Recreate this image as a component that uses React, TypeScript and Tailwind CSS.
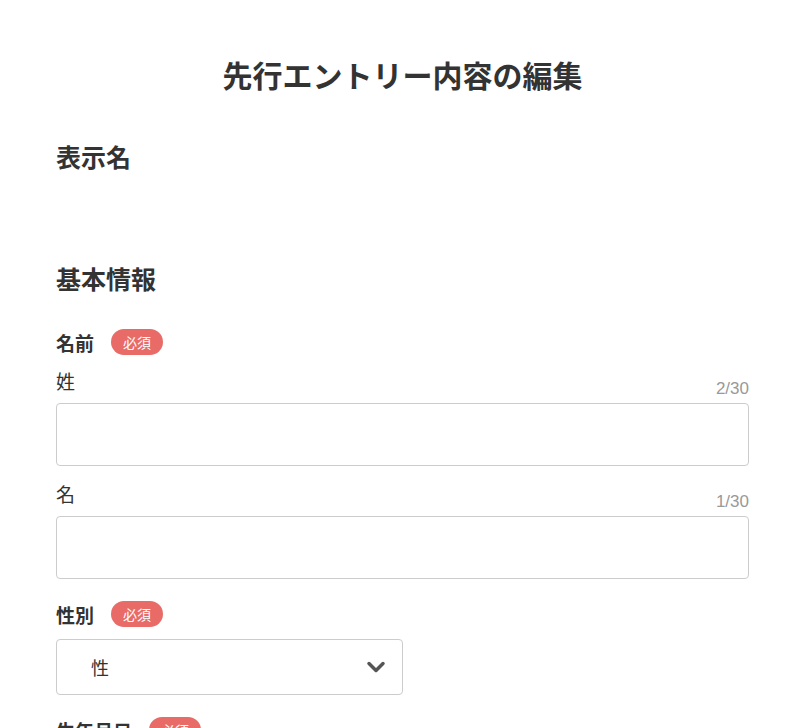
import { ChevronDown } from "lucide-react";

const font = { fontFamily: '"Noto Sans CJK JP", "Noto Sans", sans-serif' };

const Required = () => (
  <span className="inline-flex h-[26px] items-center rounded-full bg-[#e86b67] px-3 text-[14px] leading-none text-white">
    必須
  </span>
);

const FieldLabel = ({ label }: { label: string }) => (
  <div className="flex h-[26px] items-center gap-[17px]">
    <span className="text-[19px] font-bold leading-none text-[#333]">{label}</span>
    <Required />
  </div>
);

const TextField = ({ label, count }: { label: string; count: string }) => (
  <div>
    <div className="flex h-[36px] justify-between">
      <span className="self-start text-[19px] leading-[27px] text-[#333]">{label}</span>
      <span className="mb-[2px] self-end font-['Liberation_Sans',sans-serif] text-[17px] leading-[24px] text-[#999]">
        {count}
      </span>
    </div>
    <div className="h-[63px] rounded-[4px] border border-[#ccc] bg-white" />
  </div>
);

export default function App() {
  return (
    <div className="min-h-screen bg-white" style={font}>
      <div className="ml-[56px] w-[693px] pb-10">
        <h1 className="pt-[52px] text-center text-[30px] font-bold leading-[45px] text-[#333]">
          先行エントリー内容の編集
        </h1>

        <h2 className="mt-[41px] text-[25px] font-bold leading-[36px] text-[#333]">表示名</h2>

        <h2 className="mt-[86px] text-[25px] font-bold leading-[36px] text-[#333]">基本情報</h2>

        <div className="mt-[33px]">
          <FieldLabel label="名前" />
        </div>
        <div className="mt-[12px]">
          <TextField label="姓" count="2/30" />
        </div>
        <div className="mt-[14px]">
          <TextField label="名" count="1/30" />
        </div>

        <div className="mt-[22px]">
          <FieldLabel label="性別" />
        </div>
        <div className="mt-[12px] flex h-[56px] w-[347px] items-center justify-between rounded-[4px] border border-[#ccc] bg-white pl-[34px] pr-[12px]">
          <span className="text-[18px] leading-none text-[#333]">性</span>
          <ChevronDown className="h-7 w-7 text-[#555]" strokeWidth={3} />
        </div>

        <div className="mt-[22px]">
          <FieldLabel label="生年月日" />
        </div>
      </div>
    </div>
  );
}
